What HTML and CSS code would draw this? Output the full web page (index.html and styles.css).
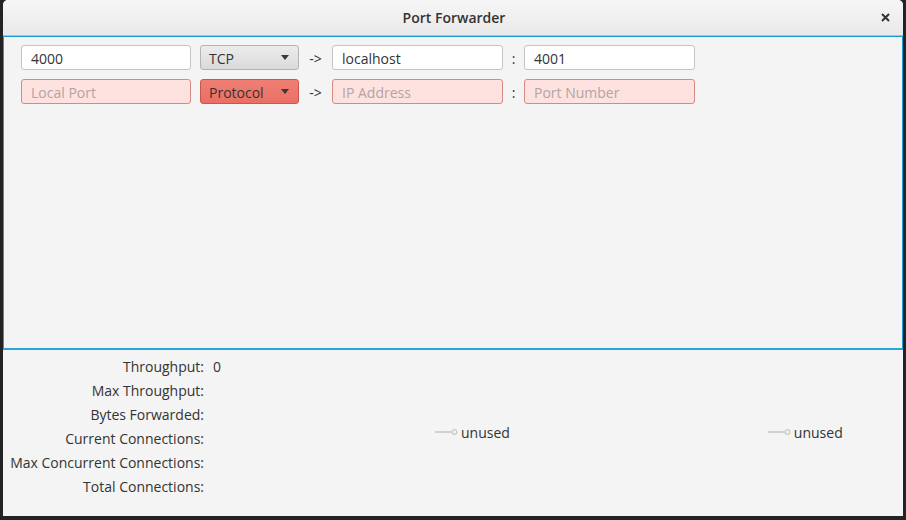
FILE: index.html
```html
<!DOCTYPE html>
<html>
<head>
<meta charset="utf-8">
<link rel="stylesheet" href="styles.css">
</head>
<body>
<div class="desktop">
  <div class="window">
    <div class="titlebar">
      <span class="title">Port Forwarder</span>
      <span class="close"><svg width="9" height="9" viewBox="0 0 9 9"><path d="M1 1 L8 8 M8 1 L1 8" stroke="#333" stroke-width="2" stroke-linecap="butt"/></svg></span>
    </div>
    <div class="rules">
      <div class="row">
        <div class="field">4000</div>
        <div class="combo"><span>TCP</span><i class="caret"></i></div>
        <span class="arrow">-&gt;</span>
        <div class="field">localhost</div>
        <span class="colon">:</span>
        <div class="field">4001</div>
      </div>
      <div class="row">
        <div class="field invalid placeholder">Local Port</div>
        <div class="combo invalid"><span>Protocol</span><i class="caret"></i></div>
        <span class="arrow">-&gt;</span>
        <div class="field invalid placeholder">IP Address</div>
        <span class="colon">:</span>
        <div class="field invalid placeholder">Port Number</div>
      </div>
    </div>
    <div class="stats">
      <div class="grid">
        <span class="label">Throughput:</span><span class="value">0</span>
        <span class="label">Max Throughput:</span><span class="value"></span>
        <span class="label">Bytes Forwarded:</span><span class="value"></span>
        <span class="label">Current Connections:</span><span class="value"></span>
        <span class="label">Max Concurrent Connections:</span><span class="value"></span>
        <span class="label">Total Connections:</span><span class="value"></span>
      </div>
      <div class="charts">
        <div class="legend"><svg width="24" height="8" viewBox="0 0 24 8"><line x1="1" y1="4" x2="19" y2="4" stroke="#d0d0d0" stroke-width="2"/><circle cx="20.5" cy="4" r="2.3" fill="#f4f4f4" stroke="#c8c8c8" stroke-width="1.2"/></svg><span>unused</span></div>
        <div class="legend"><svg width="24" height="8" viewBox="0 0 24 8"><line x1="1" y1="4" x2="19" y2="4" stroke="#d0d0d0" stroke-width="2"/><circle cx="20.5" cy="4" r="2.3" fill="#f4f4f4" stroke="#c8c8c8" stroke-width="1.2"/></svg><span>unused</span></div>
      </div>
    </div>
  </div>
</div>
</body>
</html>
```
FILE: styles.css
```css
* { box-sizing: border-box; }
html, body { margin: 0; padding: 0; }
body {
  background: #222324;
  font-family: "Open Sans", "DejaVu Sans", sans-serif;
  font-size: 14px;
  color: #333;
  width: 906px;
  height: 520px;
  overflow: hidden;
}
.desktop {
  padding-left: 3px;
  height: 520px;
}
.window {
  width: 900px;
  height: 516px;
  background: #f4f4f4;
  border-radius: 5px 5px 0 0;
  display: flex;
  flex-direction: column;
  overflow: hidden;
}
.titlebar {
  height: 36px;
  flex: none;
  background: linear-gradient(#f6f6f6, #e9e9e9);
  border-bottom: 1px solid #bcbcbc;
  display: flex;
  align-items: center;
  justify-content: center;
  position: relative;
}
.title {
  font-weight: 600;
  font-size: 14px;
  color: #333;
  padding-bottom: 1px;
  padding-left: 2px;
}
.close {
  position: absolute;
  right: 13px;
  top: 13px;
  width: 9px;
  height: 9px;
  display: block;
}
.close svg { display: block; }
.rules {
  height: 314px;
  flex: none;
  border: 1px solid #1b9ed6;
  border-bottom-width: 2px;
  border-bottom-color: #2aa5dc;
  padding: 8px 0 0 17px;
  display: flex;
  flex-direction: column;
  gap: 9px;
}
.row {
  display: flex;
  align-items: center;
  height: 25px;
}
.field {
  width: 171px;
  height: 25px;
  background: #fff;
  border: 1px solid #c3c3c3;
  border-radius: 3px;
  padding-left: 9px;
  line-height: 25px;
  color: #333;
}
.row .field:first-child { width: 170px; }
.field.invalid {
  background: #fde2df;
  border-color: #d68a84;
}
.field.placeholder { color: #b5a3a1; }
.combo {
  margin-left: 9px;
  width: 99px;
  height: 25px;
  border: 1px solid #b3b3b3;
  border-radius: 3px;
  background: linear-gradient(#ececec, #dadada);
  display: flex;
  align-items: center;
  justify-content: space-between;
  padding: 0 9px 0 8px;
  line-height: 25px;
}
.combo span { padding-top: 1px; }
.combo.invalid {
  background: linear-gradient(#f07e74, #ea6f64);
  border-color: #c7584f;
}
.caret {
  width: 0;
  height: 0;
  border-left: 4px solid transparent;
  border-right: 4px solid transparent;
  border-top: 5px solid #3a3a3a;
}
.arrow {
  width: 33px;
  text-align: center;
  color: #333;
  padding-top: 1px;
}
.colon {
  width: 21px;
  text-align: center;
  color: #333;
  padding-top: 1px;
}
.stats {
  display: flex;
  flex: 1;
}
.grid {
  width: 230px;
  padding-top: 4px;
  display: grid;
  grid-template-columns: 201px 1fr;
  grid-auto-rows: 24px;
  column-gap: 9px;
  align-items: center;
  align-content: start;
}
.label { text-align: right; white-space: nowrap; }
.charts {
  display: flex;
  padding-top: 73px;
  padding-left: 201px;
  gap: 257px;
  align-items: flex-start;
}
.legend {
  display: flex;
  align-items: center;
  height: 18px;
  gap: 3px;
}
.legend svg { display: block; }
```
